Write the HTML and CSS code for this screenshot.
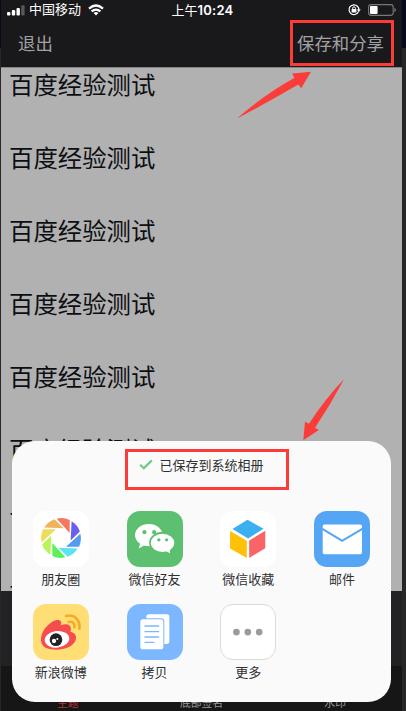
FILE: index.html
```
<!DOCTYPE html>
<html lang="zh-CN">
<head>
<meta charset="utf-8">
<title>保存和分享</title>
<link rel="stylesheet" href="styles.css">
</head>
<body>
<div class="phone">
  <div class="status">
    <div class="carrier">
      <svg width="18" height="11" viewBox="0 0 18 11"><g fill="#fff"><rect x="0" y="7" width="3.4" height="3.6" rx="1"/><rect x="4.8" y="5" width="3.4" height="5.6" rx="1"/><rect x="9.5" y="3" width="3.4" height="7.6" rx="1"/></g><rect x="14.2" y="0.3" width="3.4" height="10.3" rx="1" fill="#57585b"/></svg>
      <span>中国移动</span>
      <svg class="wifi" width="16" height="12" viewBox="0 0 16 12"><g fill="none" stroke="#fff" stroke-width="2.2"><path d="M1 4.6Q8-1.6 15 4.6"/><path d="M3.6 7.4Q8 3.7 12.4 7.4"/></g><path d="M5.6 9Q8 7.2 10.4 9L8 11.6Z" fill="#fff"/></svg>
    </div>
    <span class="time">上午<b>10:24</b></span>
    <div class="power">
      <svg width="13" height="12" viewBox="0 0 13 12"><path d="M9.4 2.2A4.9 4.9 0 1 0 10.5 7.5M9.2 2A4.9 4.9 0 0 1 10.8 6" fill="none" stroke="#fff" stroke-width="1.2"/><path d="M8.8 5.4h4L10.8 8Z" fill="#fff"/><rect x="3.6" y="5" width="4.8" height="3.6" rx=".5" fill="#fff"/><path d="M4.6 5V4.2a1.4 1.4 0 0 1 2.8 0V5" fill="none" stroke="#fff"/></svg>
      <svg width="29" height="12" viewBox="0 0 29 12"><rect x=".6" y=".6" width="24.6" height="10.8" rx="2.6" fill="none" stroke="#77787b" stroke-width="1.1"/><rect x="2" y="2" width="7.6" height="8" rx="1" fill="#fff"/><path d="M26.4 4v4Q28 7.5 28 6T26.4 4Z" fill="#77787b"/></svg>
    </div>
  </div>
  <div class="nav"><span>退出</span><span>保存和分享</span></div>
  <div class="canvas">
    <p>百度经验测试</p><p>百度经验测试</p><p>百度经验测试</p><p>百度经验测试</p>
    <p>百度经验测试</p><p>百度经验测试</p><p>百度经验测试</p><p>百度经验测试</p>
  </div>
  <div class="tools"></div>
  <div class="tabs"><span class="active">主题</span><span>底部签名</span><span>水印</span></div>
</div>

<div class="sheet">
  <div class="saved">
    <svg width="14" height="11" viewBox="0 0 14 11"><path d="M1.2 5.8 4.8 9.3 12.8 1.4" fill="none" stroke="#72c787" stroke-width="2.2"/></svg>
    <span>已保存到系统相册</span>
  </div>
  <div class="grid">
    <div class="item">
      <svg class="tile white" viewBox="99 33 168 168">
        <defs><path id="blade" d="M170 56Q190 51 209 60V99Z"/></defs>
        <use href="#blade" fill="#f2795d"/>
        <use href="#blade" fill="#6b5df0" transform="rotate(45 183 114)"/>
        <use href="#blade" fill="#559bf0" transform="rotate(90 183 114)"/>
        <use href="#blade" fill="#5ce4f0" transform="rotate(135 183 114)"/>
        <use href="#blade" fill="#60ef5c" transform="rotate(180 183 114)"/>
        <use href="#blade" fill="#b9f45a" transform="rotate(225 183 114)"/>
        <use href="#blade" fill="#f0dc5b" transform="rotate(270 183 114)"/>
        <use href="#blade" fill="#eeb35c" transform="rotate(315 183 114)"/>
      </svg>
      <span>朋友圈</span>
    </div>
    <div class="item">
      <svg class="tile green" viewBox="51 32 167 167">
        <path d="M90 130 86 144 102 135Z" fill="#fff"/><ellipse cx="116" cy="104" rx="41" ry="33" fill="#fff"/>
        <ellipse cx="157" cy="127" rx="40" ry="33" fill="#5cc070"/>
        <ellipse cx="157" cy="127" rx="35" ry="27" fill="#fff"/><path d="M167 151 179 158 179 143Z" fill="#fff"/>
        <g fill="#5cc070"><circle cx="103" cy="95" r="6"/><circle cx="132" cy="95" r="6"/><circle cx="146" cy="118" r="5"/><circle cx="169" cy="118" r="5"/></g>
      </svg>
      <span>微信好友</span>
    </div>
    <div class="item">
      <svg class="tile white" viewBox="54 32 167 167">
        <path d="M136 58 184 85 138 114 91 86Z" fill="#3cb0ef"/><path d="M84 92 134 121V172L84 144Z" fill="#ffc107"/><path d="M189 91V143L141 172V120Z" fill="#fb6467"/>
      </svg>
      <span>微信收藏</span>
    </div>
    <div class="item">
      <svg class="tile blue" viewBox="333 32 167 167">
        <rect x="359" y="72" width="117" height="89" rx="5" fill="#fff"/><path d="M358 85 417 121 477 85" fill="none" stroke="#55a5f5" stroke-width="6"/>
      </svg>
      <span>邮件</span>
    </div>
    <div class="item">
      <svg class="tile yellow" viewBox="99 41 168 168">
        <path d="M123 151C121 126 143 98 167 90C181 87 187 94 182 105C198 98 213 102 213 116C213 119 212 121 211 124C226 127 231 138 227 149C220 169 195 178 169 178C143 178 125 170 123 151Z" fill="#f64c50"/>
        <ellipse cx="171" cy="147" rx="37" ry="25" fill="#fff" transform="rotate(-7 171 147)"/>
        <circle cx="168" cy="148" r="19" fill="#222126"/><circle cx="162" cy="152" r="6.5" fill="#fff"/><circle cx="172" cy="146" r="3" fill="#fff"/>
        <g fill="none" stroke="#f7ab25" stroke-width="8" stroke-linecap="round"><path d="M198 77C223 70 242 90 238 115"/><path d="M206 95C217 92 225 99 223 111"/></g>
      </svg>
      <span>新浪微博</span>
    </div>
    <div class="item">
      <svg class="tile sky" viewBox="50 41 168 168">
        <rect x="108" y="72" width="69" height="89" rx="8" fill="#fff"/><rect x="87" y="84" width="75" height="96" rx="10" fill="#7cb7ff"/><rect x="90" y="87" width="69" height="90" rx="8" fill="#fff"/>
        <path d="M104 107h41M104 124h41M104 140h41M104 156h27" stroke="#7cb7ff" stroke-width="4" stroke-linecap="round"/>
      </svg>
      <span>拷贝</span>
    </div>
    <div class="item">
      <svg class="tile more" viewBox="0 0 56 56"><g fill="#9b9b9b"><circle cx="16" cy="28" r="3.5"/><circle cx="27.8" cy="28" r="3.5"/><circle cx="39.6" cy="28" r="3.5"/></g></svg>
      <span>更多</span>
    </div>
  </div>
</div>

<div class="mark mark-share"></div>
<div class="mark mark-saved"></div>
<svg class="arrows" width="406" height="711" viewBox="0 0 406 711"><g fill="#fb3c39"><path d="M311 71.8 292.3 73.6 294.3 78Q265 94 237 118.6Q268 102 298.3 84.4L301.2 88.2Z"/><path d="M344 379.3Q325 399 309 423.8L305 421.7 303.3 440.2 318.8 430 315 427.7Q331 404 344 379.3Z"/></g></svg>
</body>
</html>
```
FILE: styles.css
```
* { box-sizing: border-box; }
body {
  margin: 0;
  width: 406px;
  height: 711px;
  overflow: hidden;
  position: relative;
  padding: 0 4px 0 1px;
  background: linear-gradient(#060a1c 0 48px, #272728 48px);
  font-family: "Liberation Sans", "Noto Sans CJK SC", sans-serif;
}
svg { display: block; }
.phone {
  height: 711px;
  display: flex;
  flex-direction: column;
  background: #19191b;
}
.status {
  height: 20px;
  flex: none;
  display: grid;
  grid-template-columns: 1fr auto 1fr;
  align-items: center;
  padding: 0 5px 0 6px;
  color: #fff;
  font-size: 13px;
  line-height: 20px;
}
.carrier { display: flex; align-items: center; gap: 4px; }
.wifi { margin-left: 3px; }
.time { font-family: Inter, "Noto Sans CJK SC", sans-serif; padding-left: 1px; }
.time b { font-weight: 600; letter-spacing: .25px; }
.power { display: flex; align-items: center; justify-content: flex-end; gap: 7px; }
.nav {
  height: 47px;
  flex: none;
  display: flex;
  justify-content: space-between;
  align-items: center;
  padding: 0 18px 2px 17px;
  color: #a2a2a4;
  font-size: 17.4px;
}
.canvas {
  height: 524px;
  flex: none;
  overflow: hidden;
  background: #b1b1b1;
  border-top: 1px solid #858585;
  padding: 0 8px;
}
.canvas p {
  margin: 0;
  height: 73px;
  font-size: 24.4px;
  line-height: 36px;
  color: #0d0e12;
}
.tools { height: 75px; flex: none; background: #222224; }
.tabs {
  flex: 1;
  display: grid;
  grid-template-columns: repeat(3, 1fr);
  align-items: end;
  text-align: center;
  font-size: 10.8px;
  line-height: 15px;
  color: #98989a;
  background: #161617;
}
.tabs .active { color: #b33438; }
.sheet {
  position: absolute;
  left: 12px;
  top: 441px;
  width: 379px;
  height: 261px;
  border-radius: 23px;
  background: #fafafa;
  color: #303032;
  padding: 13px 2px 0;
}
.saved {
  height: 20px;
  display: flex;
  justify-content: center;
  align-items: center;
  gap: 6px;
  font-size: 13px;
}
.grid {
  display: grid;
  grid-template-columns: repeat(4, 1fr);
  grid-auto-rows: 93px;
  margin-top: 37px;
}
.item {
  display: flex;
  flex-direction: column;
  align-items: center;
  font-size: 13px;
  line-height: 20px;
  gap: 3px;
}
.tile { width: 56px; height: 56px; flex: none; border-radius: 13px; }
.white { background: #fff; }
.green { background: #5cc070; }
.blue { background: #55a5f5; }
.yellow { background: #ffdf75; }
.sky { background: #7cb7ff; }
.more { background: #fff; border: 1px solid #dcdcdc; }
.mark { position: absolute; border: 3px solid #fb3c39; }
.mark-share { left: 290px; top: 20px; width: 104px; height: 46px; }
.mark-saved { left: 125px; top: 449px; width: 164px; height: 41px; }
.arrows { position: absolute; left: 0; top: 0; }
```
